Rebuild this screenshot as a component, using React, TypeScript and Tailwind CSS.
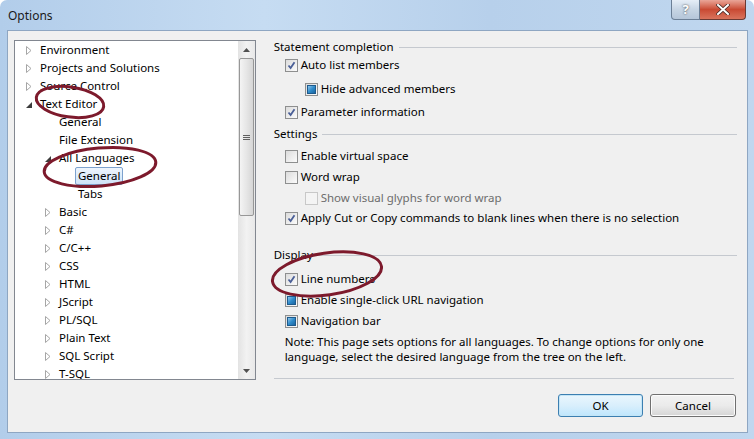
import clsx from "clsx";

type TreeItem = {
  label: string;
  level: number;
  arrow?: "closed" | "open";
  selected?: boolean;
};

const treeItems: TreeItem[] = [
  { label: "Environment", level: 0, arrow: "closed" },
  { label: "Projects and Solutions", level: 0, arrow: "closed" },
  { label: "Source Control", level: 0, arrow: "closed" },
  { label: "Text Editor", level: 0, arrow: "open" },
  { label: "General", level: 1 },
  { label: "File Extension", level: 1 },
  { label: "All Languages", level: 1, arrow: "open" },
  { label: "General", level: 2, selected: true },
  { label: "Tabs", level: 2 },
  { label: "Basic", level: 1, arrow: "closed" },
  { label: "C#", level: 1, arrow: "closed" },
  { label: "C/C++", level: 1, arrow: "closed" },
  { label: "CSS", level: 1, arrow: "closed" },
  { label: "HTML", level: 1, arrow: "closed" },
  { label: "JScript", level: 1, arrow: "closed" },
  { label: "PL/SQL", level: 1, arrow: "closed" },
  { label: "Plain Text", level: 1, arrow: "closed" },
  { label: "SQL Script", level: 1, arrow: "closed" },
  { label: "T-SQL", level: 1, arrow: "closed" },
];

const indents = ["pl-[11px]", "pl-[30px]", "pl-[49px]"];

const Arrow = ({ kind }: { kind?: "closed" | "open" }) => {
  if (!kind) return <span className="w-[6px] shrink-0" />;
  if (kind === "open")
    return (
      <svg width="6" height="9" viewBox="0 0 6 9" className="shrink-0">
        <path d="M6 2 L6 8 L0 8 Z" fill="#3c3c3c" />
      </svg>
    );
  return (
    <svg width="6" height="9" viewBox="0 0 6 9" className="shrink-0">
      <path d="M0.5 0.5 L5 4.5 L0.5 8.5 Z" fill="none" stroke="#a6a6a6" />
    </svg>
  );
};

type CheckState = "checked" | "unchecked" | "mixed" | "disabled";

const Check = ({ state }: { state: CheckState }) => (
  <span
    className={clsx(
      "w-[13px] h-[13px] shrink-0 border flex items-center justify-center",
      state === "disabled"
        ? "border-[#c8c8c8] bg-[#f4f4f4]"
        : "border-[#8e8f8f] bg-gradient-to-br from-[#dcdcdc] to-[#fbfbfb]"
    )}
  >
    {state === "checked" && (
      <svg width="9" height="9" viewBox="0 0 9 9">
        <path
          d="M1.5 4.5 L3.6 7 L7.5 1.2"
          fill="none"
          stroke="#4a5f97"
          strokeWidth="1.8"
        />
      </svg>
    )}
    {state === "mixed" && (
      <span className="w-[9px] h-[9px] border border-[#1d5a8c] bg-gradient-to-br from-[#8bc6ec] via-[#2f8ccb] to-[#1c66a2]" />
    )}
  </span>
);

const CheckRow = ({
  label,
  state,
  indent,
  mt,
}: {
  label: string;
  state: CheckState;
  indent?: boolean;
  mt: string;
}) => (
  <div
    className={clsx(
      "h-[16px] flex items-center gap-[3px]",
      indent ? "pl-[31px]" : "pl-[11px]",
      mt
    )}
  >
    <Check state={state} />
    <span className={state === "disabled" ? "text-[#6d6d6d]" : "text-black"}>
      {label}
    </span>
  </div>
);

const GroupHeader = ({ label, mt }: { label: string; mt: string }) => (
  <div className={clsx("h-[16px] flex items-center gap-[5px] pr-[10px]", mt)}>
    <span>{label}</span>
    <span className="flex-1 h-px bg-[#c5c9cf]" />
  </div>
);

const App = () => {
  return (
    <div
      className="relative w-[754px] h-[439px] overflow-hidden rounded-t-[7px] bg-[linear-gradient(90deg,#b2cdea,#c6dcf2_35%,#b7d0eb_65%,#c0d7ef)] text-[11.5px] text-black"
      style={{ fontFamily: '"Segoe UI", "Noto Sans", sans-serif' }}
    >
      {/* title bar */}
      <div className="h-[30px] flex items-start justify-between pl-[8px] pr-[8px]">
        <span className="mt-[7px] text-[12px] text-[#1a1a1a]">Options</span>
        <div className="flex">
          <div className="w-[29px] h-[20px] rounded-bl-[4px] border border-t-0 border-[#6b7f96] bg-gradient-to-b from-[#e6eef7] via-[#c7d5e4] to-[#b5c6d9] flex items-center justify-center text-white font-bold text-[13px] [text-shadow:0_0_2px_#333]">
            ?
          </div>
          <div className="w-[46px] h-[20px] rounded-br-[4px] border border-t-0 border-l-0 border-[#6b3a33] bg-gradient-to-b from-[#e9a598] via-[#c94a33] to-[#d9735c] flex items-center justify-center">
            <svg width="14" height="11" viewBox="0 0 14 11">
              <path
                d="M2 1 L12 10 M12 1 L2 10"
                stroke="#4a2a26"
                strokeWidth="3.6"
                strokeLinecap="square"
              />
              <path
                d="M2 1 L12 10 M12 1 L2 10"
                stroke="#ffffff"
                strokeWidth="2"
                strokeLinecap="square"
              />
            </svg>
          </div>
        </div>
      </div>

      {/* client area */}
      <div className="ml-[7px] mr-[6px] h-[403px] border border-[#8ea6c2] bg-[#f0f0f0] flex">
        {/* tree */}
        <div className="ml-[6px] mt-[9px] w-[242px] h-[340px] border border-[#828790] bg-white flex">
          <div className="flex-1 overflow-hidden">
            {treeItems.map((it, i) => (
              <div
                key={i}
                className={clsx("h-[18px] flex items-center", indents[it.level])}
              >
                <Arrow kind={it.arrow} />
                <span
                  className={clsx(
                    "ml-[5px] px-[2px] leading-[16px] border",
                    it.selected
                      ? "border-[#7da2ce] rounded-[2px] bg-gradient-to-b from-[#eef5fd] to-[#cfe3f8]"
                      : "border-transparent"
                  )}
                >
                  {it.label}
                </span>
              </div>
            ))}
          </div>
          {/* scrollbar */}
          <div className="w-[17px] flex flex-col bg-gradient-to-r from-[#e3e3e3] via-[#f2f2f2] to-[#e8e8e8]">
            <div className="h-[17px] flex items-center justify-center">
              <svg width="7" height="4" viewBox="0 0 7 4">
                <path d="M3.5 0 L7 4 L0 4 Z" fill="#505050" />
              </svg>
            </div>
            <div className="h-[158px] mx-px rounded-[2px] border border-[#979797] bg-gradient-to-r from-[#f4f4f4] via-[#e6e6e6] to-[#d6d6d6] flex items-center justify-center">
              <svg width="7" height="7" viewBox="0 0 7 7">
                <path d="M0 1.5 H7 M0 3.5 H7 M0 5.5 H7" stroke="#606060" />
              </svg>
            </div>
            <div className="flex-1" />
            <div className="h-[17px] flex items-center justify-center">
              <svg width="7" height="4" viewBox="0 0 7 4">
                <path d="M0 0 L7 0 L3.5 4 Z" fill="#505050" />
              </svg>
            </div>
          </div>
        </div>

        {/* options pane */}
        <div className="ml-[18px] w-[474px] flex flex-col">
          <GroupHeader label="Statement completion" mt="mt-[8px]" />
          <CheckRow label="Auto list members" state="checked" mt="mt-[2px]" />
          <CheckRow label="Hide advanced members" state="mixed" indent mt="mt-[8px]" />
          <CheckRow label="Parameter information" state="checked" mt="mt-[7px]" />
          <GroupHeader label="Settings" mt="mt-[6px]" />
          <CheckRow label="Enable virtual space" state="unchecked" mt="mt-[6px]" />
          <CheckRow label="Word wrap" state="unchecked" mt="mt-[5px]" />
          <CheckRow
            label="Show visual glyphs for word wrap"
            state="disabled"
            indent
            mt="mt-[5px]"
          />
          <CheckRow
            label="Apply Cut or Copy commands to blank lines when there is no selection"
            state="checked"
            mt="mt-[4px]"
          />
          <GroupHeader label="Display" mt="mt-[21px]" />
          <CheckRow label="Line numbers" state="checked" mt="mt-[8px]" />
          <CheckRow label="Enable single-click URL navigation" state="mixed" mt="mt-[5px]" />
          <CheckRow label="Navigation bar" state="mixed" mt="mt-[5px]" />
          <p className="mt-[5px] pl-[11px] pr-[40px] leading-[15px]">
            Note: This page sets options for all languages. To change options for only one
            language, select the desired language from the tree on the left.
          </p>
          <div className="mt-[14px] mr-[13px] h-px bg-[#c5c9cf]" />
          <div className="mt-[15px] flex justify-end gap-[7px] mr-[11px]">
            <button className="w-[85px] h-[23px] rounded-[3px] border border-[#3c7fb1] bg-gradient-to-b from-[#eaf6fd] via-[#d9effc] to-[#bee6fd] shadow-[inset_0_0_0_1px_#c4e5f6]">
              OK
            </button>
            <button className="w-[86px] h-[23px] rounded-[3px] border border-[#707070] bg-gradient-to-b from-[#f2f2f2] via-[#ebebeb] to-[#d5d5d5] shadow-[inset_0_0_0_1px_#fcfcfc]">
              Cancel
            </button>
          </div>
        </div>
      </div>

      {/* annotation ellipses */}
      <svg
        className="absolute inset-0 pointer-events-none"
        width="754"
        height="439"
        viewBox="0 0 754 439"
      >
        <g fill="none" stroke="#7d1a2c" strokeWidth="3">
          <ellipse cx="70" cy="102" rx="34" ry="15" transform="rotate(8 70 102)" />
          <ellipse cx="100" cy="167" rx="56" ry="19" transform="rotate(-5 100 167)" />
          <ellipse cx="327" cy="274" rx="55" ry="21" transform="rotate(-8 327 274)" />
        </g>
      </svg>
    </div>
  );
};

export default App;
